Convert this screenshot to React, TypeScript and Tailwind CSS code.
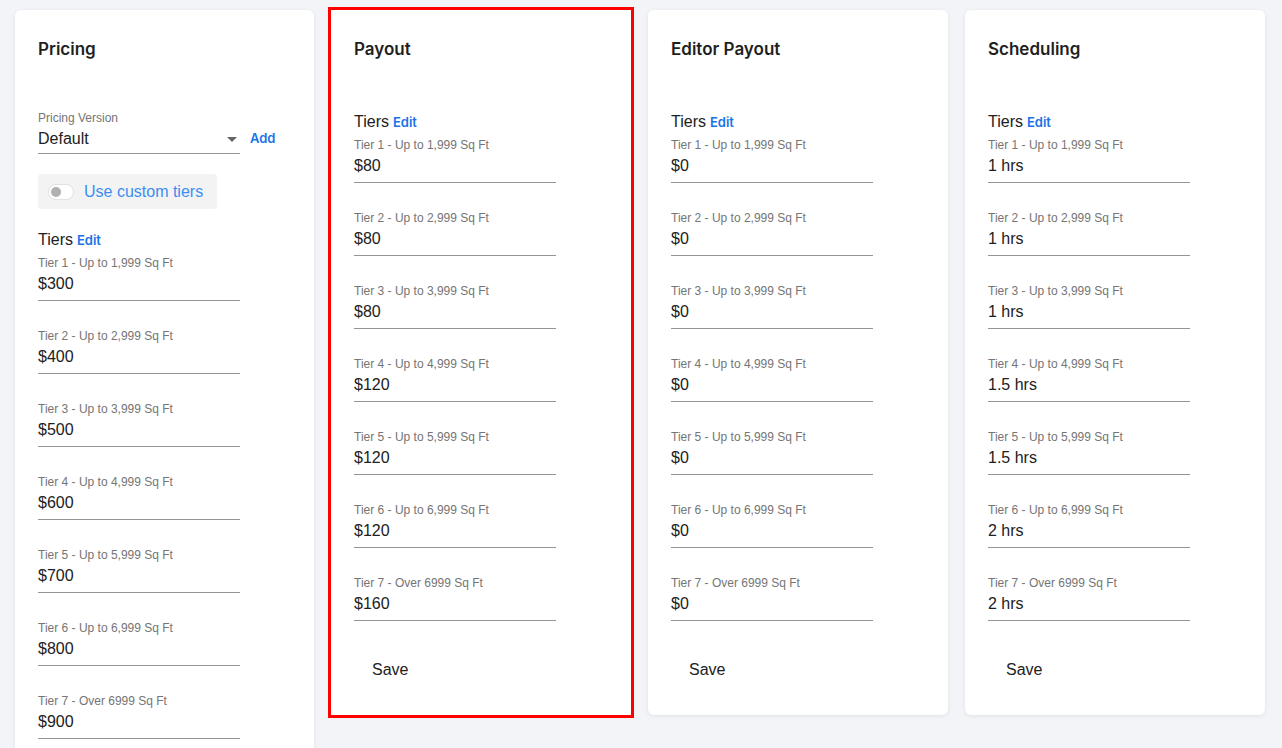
const tiers = [
  'Tier 1 - Up to 1,999 Sq Ft',
  'Tier 2 - Up to 2,999 Sq Ft',
  'Tier 3 - Up to 3,999 Sq Ft',
  'Tier 4 - Up to 4,999 Sq Ft',
  'Tier 5 - Up to 5,999 Sq Ft',
  'Tier 6 - Up to 6,999 Sq Ft',
  'Tier 7 - Over 6999 Sq Ft',
]

const font = { fontFamily: '"Liberation Sans", Arial, sans-serif' }
const titleFont = 'font-[Inter,sans-serif]'

function Field({ label, value }: { label: string; value: string }) {
  return (
    <div className="w-[202px] mb-[28px]">
      <div className="text-[12px] leading-[14px] text-[#757575]">{label}</div>
      <div className="h-[31px] pt-[3px] border-b border-[#949494] text-[16px] leading-[22px] text-[#212121]">
        {value}
      </div>
    </div>
  )
}

function TiersHeader() {
  return (
    <div className="flex items-baseline gap-1 h-[22px] mb-[6px]">
      <span className="text-[16px] text-[#212121]">Tiers</span>
      <span className={'text-[13px] font-semibold text-[#1a73e8] ' + titleFont}>Edit</span>
    </div>
  )
}

function TierCard({ title, values, highlight }: { title: string; values: string[]; highlight?: boolean }) {
  return (
    <div
      className={
        'w-[300px] h-[705px] bg-white shadow-[0_1px_4px_rgba(0,0,0,0.08)] pl-[23px] pt-[27px] ' +
        (highlight ? 'outline-[3px] outline-solid outline-[#ff0000]' : 'rounded-md')
      }
    >
      <h2 className={'text-[17px] leading-[24px] font-semibold text-[#1f1f1f] ' + titleFont}>{title}</h2>
      <div className="mt-[49px]">
        <TiersHeader />
        {values.map((v, i) => (
          <Field key={i} label={tiers[i]} value={v} />
        ))}
      </div>
      <button className="ml-[18px] mt-[9px] text-[16px] font-medium text-[#212121]">Save</button>
    </div>
  )
}

export default function App() {
  return (
    <div className="min-h-screen bg-[#f3f4f7] overflow-hidden" style={font}>
      <div className="flex gap-[17px] pl-[15px] pt-[10px] items-start">
        <div className="w-[299px] h-[760px] bg-white rounded-md shadow-[0_1px_4px_rgba(0,0,0,0.08)] pl-[23px] pt-[27px]">
          <h2 className={'text-[17px] leading-[24px] font-semibold text-[#1f1f1f] ' + titleFont}>Pricing</h2>
          <div className="mt-[50px] flex items-end gap-[10px]">
            <div className="w-[202px] border-b border-[#949494]">
              <div className="text-[12px] leading-[14px] text-[#757575]">Pricing Version</div>
              <div className="flex items-center justify-between h-[28px] text-[16px] text-[#212121]">
                <span>Default</span>
                <span className="mr-[3px] w-0 h-0 border-l-[5px] border-r-[5px] border-t-[5px] border-l-transparent border-r-transparent border-t-[#666]" />
              </div>
            </div>
            <span className={'text-[13px] font-semibold text-[#1a73e8] mb-[6px] ' + titleFont}>Add</span>
          </div>
          <div className="mt-[20px] w-[179px] h-[35px] bg-[#f3f3f4] rounded flex items-center pl-[10px] gap-[10px]">
            <span className="w-[26px] h-[16px] rounded-full bg-white border border-[#e2e2e2] flex items-center pl-[2px]">
              <span className="w-[10px] h-[10px] rounded-full bg-[#b0b0b0]" />
            </span>
            <span className="text-[16px] text-[#3b8ef0]">Use custom tiers</span>
          </div>
          <div className="mt-[19px]">
            <TiersHeader />
            {['$300', '$400', '$500', '$600', '$700', '$800', '$900'].map((v, i) => (
              <Field key={i} label={tiers[i]} value={v} />
            ))}
          </div>
        </div>
        <TierCard title="Payout" highlight values={['$80', '$80', '$80', '$120', '$120', '$120', '$160']} />
        <TierCard title="Editor Payout" values={['$0', '$0', '$0', '$0', '$0', '$0', '$0']} />
        <TierCard
          title="Scheduling"
          values={['1 hrs', '1 hrs', '1 hrs', '1.5 hrs', '1.5 hrs', '2 hrs', '2 hrs']}
        />
      </div>
    </div>
  )
}
